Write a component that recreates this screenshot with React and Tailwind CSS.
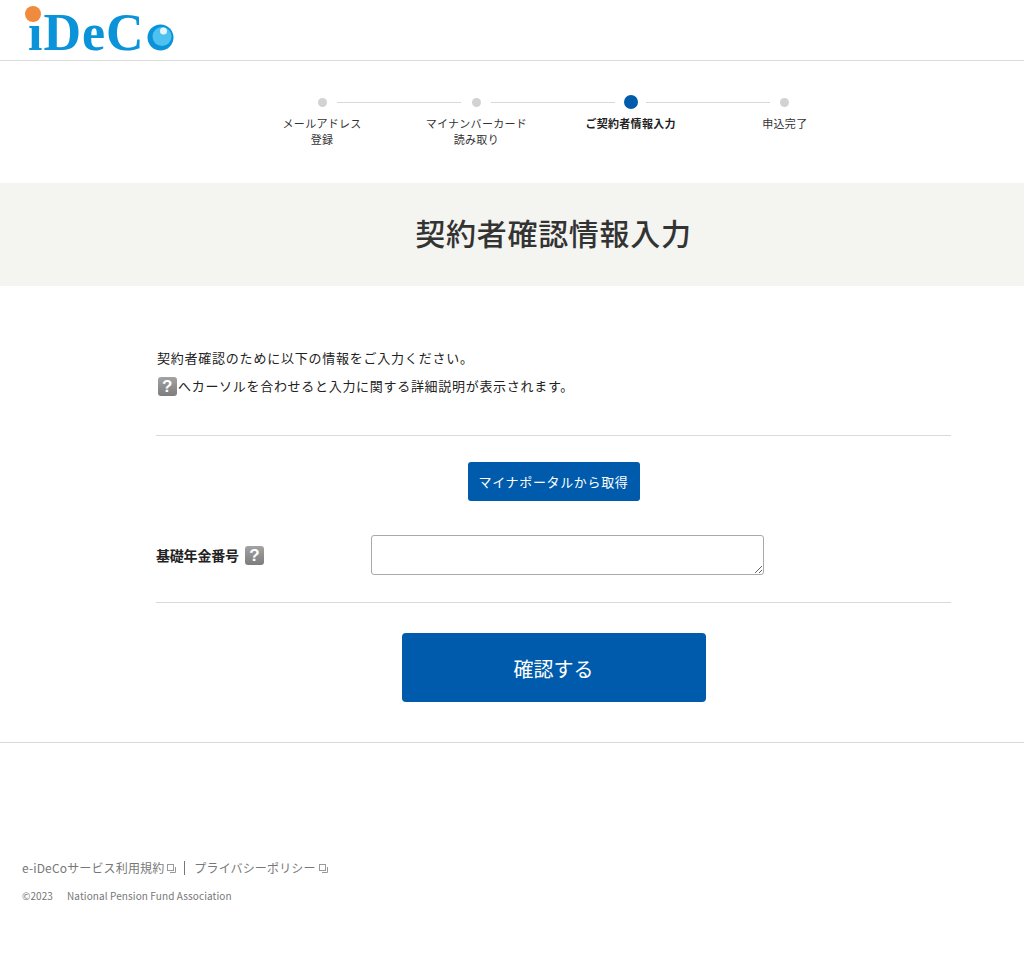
const jp = "font-['Noto_Sans_CJK_JP','Noto_Sans',sans-serif]";

const steps = [
  { label: ["メールアドレス", "登録"] },
  { label: ["マイナンバーカード", "読み取り"] },
  { label: ["ご契約者情報入力"], active: true },
  { label: ["申込完了"] },
];

function HelpIcon() {
  return (
    <span className="inline-flex h-[19px] w-[19px] shrink-0 items-center justify-center rounded-[3px] bg-gradient-to-b from-[#a3a3a3] to-[#7d7d7d] text-[17px] leading-none font-bold text-white font-['Liberation_Sans',sans-serif]">
      ?
    </span>
  );
}

function WindowIcon() {
  return (
    <svg width="9" height="9" viewBox="0 0 9 9" fill="none" stroke="#999" strokeWidth="1" className="ml-[3px] inline-block">
      <rect x="0.5" y="0.5" width="6" height="6" />
      <path d="M8.5 3v5.5H3" />
    </svg>
  );
}

function Logo() {
  return (
    <div className="relative flex h-[60px] items-start pl-[28px]">
      <span className="mt-[7px] text-[52px] leading-[52px] font-bold tracking-[1px] text-[#0a93d9] font-['Liberation_Serif',serif]">
        iDeC
      </span>
      <span className="absolute left-[25px] top-[6px] h-[16px] w-[16px] rounded-full bg-[#f08a3c]" />
      <svg className="mt-[24px] ml-[2px]" width="27" height="27" viewBox="0 0 27 27">
        <circle cx="13.5" cy="13.5" r="13" fill="#0a93d9" />
        <circle cx="15" cy="12.5" r="9.5" fill="#4fc1f0" />
        <circle cx="16.5" cy="7" r="3.5" fill="#e4f6fd" />
      </svg>
    </div>
  );
}

export default function App() {
  return (
    <div className={`min-h-[975px] bg-white text-[#222] ${jp}`}>
      <header className="h-[61px] border-b border-[#d9d9d9]">
        <Logo />
      </header>

      {/* steps */}
      <div className="h-[122px] pt-[34px]">
        <ol className="ml-[245px] grid w-[617px] grid-cols-4">
          {steps.map((step, i) => (
            <li key={i} className="relative flex flex-col items-center">
              <div className="flex h-[14px] items-center">
                <span className={step.active ? "h-[14px] w-[14px] rounded-full bg-[#005bac]" : "h-[9px] w-[9px] rounded-full bg-[#d2d2d2]"} />
              </div>
              {i < steps.length - 1 && (
                <span className="absolute left-[92px] top-[7px] h-px w-[124px] bg-[#d9d9d9]" />
              )}
              <p className={`mt-[6px] text-center text-[11px] leading-[16px] tracking-[0.3px] ${step.active ? "font-bold" : "text-[#333]"}`}>
                {step.label.map((line) => (
                  <span key={line} className="block">{line}</span>
                ))}
              </p>
            </li>
          ))}
        </ol>
      </div>

      <div className="flex h-[103px] items-center bg-[#f4f4f0] pb-[5px]">
        <h1 className="ml-[156px] w-[795px] text-center text-[30px] font-medium tracking-[0.7px] text-[#333]">
          契約者確認情報入力
        </h1>
      </div>

      <main className="ml-[156px] w-[795px] pt-[62px]">
        <div className="h-[87px] text-[13px] leading-[20px] tracking-[0.8px]">
          <p className="pl-[1px] tracking-[0.77px]">契約者確認のために以下の情報をご入力ください。</p>
          <p className="mt-[8px] flex items-center gap-[1px] pl-[2px] tracking-[0.7px]">
            <HelpIcon />
            へカーソルを合わせると入力に関する詳細説明が表示されます。
          </p>
        </div>

        <div className="border-t border-[#d9d9d9] pt-[26px]">
          <div className="flex justify-center">
            <button className="h-[39px] w-[172px] rounded-[3px] bg-[#005bac] text-[13px] tracking-[0.65px] text-white">
              マイナポータルから取得
            </button>
          </div>
          <div className="mt-[34px] flex h-[40px] items-center">
            <label className="flex w-[215px] items-center gap-[6px] text-[14px] font-bold tracking-[-0.2px]">
              基礎年金番号
              <HelpIcon />
            </label>
            <textarea className="h-[40px] w-[393px] rounded-[3px] border border-[#a9a9a9] bg-white" />
          </div>
        </div>

        <div className="mt-[27px] border-t border-[#d9d9d9] pt-[30px]">
          <button className="mx-auto block h-[69px] w-[304px] rounded-[4px] bg-[#005bac] pt-[3px] text-[20px] text-white">
            確認する
          </button>
        </div>
      </main>

      <div className="mt-[40px] border-t border-[#d9d9d9]" />

      <footer className="pl-[22px] pt-[116px] text-[#777]">
        <div className="flex items-center text-[12px] leading-[18px] tracking-[0.15px]">
          <span>e-iDeCoサービス利用規約</span>
          <WindowIcon />
          <span className="ml-[8px] mr-[9px] h-[14px] w-px bg-[#777]" />
          <span>プライバシーポリシー</span>
          <WindowIcon />
        </div>
        <p className="mt-[11px] text-[10px] leading-[16px] tracking-[0.1px]">
          ©2023<span className="ml-[14px]">National Pension Fund Association</span>
        </p>
      </footer>
    </div>
  );
}
